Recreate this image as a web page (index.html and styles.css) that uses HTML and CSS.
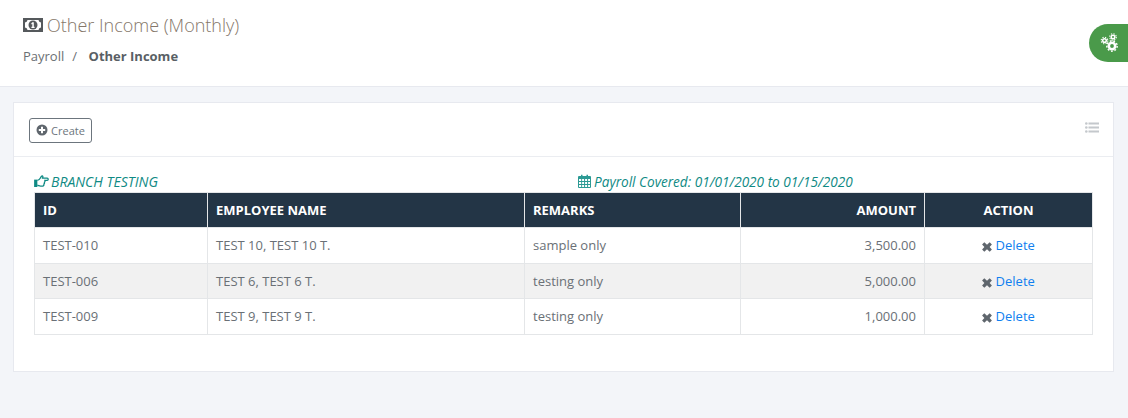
FILE: index.html
```html
<!DOCTYPE html>
<html lang="en">
<head>
<meta charset="utf-8">
<title>Other Income (Monthly)</title>
<link rel="stylesheet" href="styles.css">
</head>
<body>
<header class="page-header">
  <h1 class="title">
    <svg class="money-icon" viewBox="0 0 20 14" aria-hidden="true"><path fill-rule="evenodd" fill="#55595c" d="M0 0h20v14H0zM2 4.500v5A3 3 0 0 1 4.500 12h11A3 3 0 0 1 18 9.500v-5A3 3 0 0 1 15.500 2h-11A3 3 0 0 1 2 4.500z"/><circle cx="10" cy="7" r="4.500" fill="#55595c"/><path fill="#fff" d="M9.300 4.300h1.500v4.400h.8V10H8.400V8.700h.9V6.100l-.7.300-.4-1z"/></svg>
    <span>Other Income (Monthly)</span>
  </h1>
  <nav class="crumbs"><span>Payroll</span><span class="sep">/</span><strong>Other Income</strong></nav>
  <button class="settings-tab" aria-label="Settings">
    <svg viewBox="0 0 20 20" width="20" height="20" aria-hidden="true">
      <g fill="none" stroke="#fff">
        <circle cx="12" cy="13" r="3.200" stroke-width="2.600"/>
        <circle cx="12" cy="13" r="5.200" stroke-width="1.400" stroke-dasharray="1.800 1.800"/>
        <circle cx="4.500" cy="7.500" r="1.800" stroke-width="1.500"/>
        <circle cx="4.500" cy="7.500" r="3.300" stroke-width="1.100" stroke-dasharray="1.300 1.300"/>
        <circle cx="13" cy="4" r="1.800" stroke-width="1.500"/>
        <circle cx="13" cy="4" r="3.300" stroke-width="1.100" stroke-dasharray="1.300 1.300"/>
      </g>
    </svg>
  </button>
</header>
<main class="content">
  <section class="card">
    <div class="card-head">
      <button class="create">
        <svg viewBox="0 0 12 12" width="12" height="12" aria-hidden="true"><circle cx="6" cy="6" r="5.500" fill="#5f666d"/><path d="M5 2.800h2V5h2.200v2H7v2.200H5V7H2.800V5H5z" fill="#fff"/></svg>
        <span class="create-label">Create</span>
      </button>
      <svg class="list-icon" viewBox="0 0 14 11" width="14" height="11" aria-hidden="true"><g fill="#c4c8cc"><circle cx="1.300" cy="1.500" r="1.300"/><circle cx="1.300" cy="5.500" r="1.300"/><circle cx="1.300" cy="9.500" r="1.300"/><rect x="3.500" y=".5" width="10.500" height="2"/><rect x="3.500" y="4.500" width="10.500" height="2"/><rect x="3.500" y="8.500" width="10.500" height="2"/></g></svg>
    </div>
    <div class="card-body">
      <div class="meta">
        <div class="meta-item branch">
          <svg viewBox="0 0 16 13" width="15" height="12" aria-hidden="true"><path fill="#0f8a84" d="M0 5h3.500v8H0z"/><path fill="none" stroke="#0f8a84" stroke-width="1.400" d="M3.500 5.800c1.500 0 2.500-1.200 3.300-2.600C7.400 2.100 7.900 1 8.700.9c.9 0 1 1.100.5 2.400h5c1.400 0 1.400 2.500 0 2.500h-2.500c.3 1 .1 1.700-.5 2.100.2.800 0 1.500-.6 1.900.2 1 -.2 2.200-1.300 2.200H7c-1.300 0-2.300-.7-3.500-.9"/></svg>
          <em>BRANCH TESTING</em>
        </div>
        <div class="meta-item period">
          <svg viewBox="0 0 13 14" width="13" height="14" aria-hidden="true"><path fill="#2b9a94" fill-rule="evenodd" d="M1 2h2V.8h1.500V2h4V.8H10V2h2a1 1 0 0 1 1 1v10a1 1 0 0 1-1 1H1a1 1 0 0 1-1-1V3a1 1 0 0 1 1-1zM1 5v2h2.200V5zm3.100 0v2h2V5zm3 0v2h2V5zm3 0v2H12V5zM1 8v2h2.200V8zm3.100 0v2h2V8zm3 0v2h2V8zm3 0v2H12V8zM1 11v2h2.200v-2zm3.100 0v2h2v-2zm3 0v2h2v-2zm3 0v2H12v-2z"/></svg>
          <em>Payroll Covered: 01/01/2020 to 01/15/2020</em>
        </div>
      </div>
      <table class="income">
        <colgroup><col class="c-id"><col class="c-name"><col class="c-remarks"><col class="c-amount"><col class="c-action"></colgroup>
        <thead>
          <tr><th>ID</th><th>EMPLOYEE NAME</th><th>REMARKS</th><th class="right">AMOUNT</th><th class="center">ACTION</th></tr>
        </thead>
        <tbody>
          <tr><td>TEST-010</td><td>TEST 10, TEST 10 T.</td><td>sample only</td><td class="right">3,500.00</td><td class="center"><svg class="x" viewBox="0 0 10 10" width="10" height="10" aria-hidden="true"><path d="M2.300.3 5 2.700 7.700.3 9.900 2.500 7.600 5l2.300 2.500-2.200 2.200L5 7.300 2.300 9.700.1 7.500 2.400 5 .1 2.500z"/></svg> <a href="#">Delete</a></td></tr>
          <tr class="alt"><td>TEST-006</td><td>TEST 6, TEST 6 T.</td><td>testing only</td><td class="right">5,000.00</td><td class="center"><svg class="x" viewBox="0 0 10 10" width="10" height="10" aria-hidden="true"><path d="M2.300.3 5 2.700 7.700.3 9.900 2.500 7.600 5l2.300 2.500-2.200 2.200L5 7.300 2.300 9.700.1 7.500 2.400 5 .1 2.500z"/></svg> <a href="#">Delete</a></td></tr>
          <tr><td>TEST-009</td><td>TEST 9, TEST 9 T.</td><td>testing only</td><td class="right">1,000.00</td><td class="center"><svg class="x" viewBox="0 0 10 10" width="10" height="10" aria-hidden="true"><path d="M2.300.3 5 2.700 7.700.3 9.900 2.500 7.600 5l2.300 2.500-2.200 2.200L5 7.300 2.300 9.700.1 7.500 2.400 5 .1 2.500z"/></svg> <a href="#">Delete</a></td></tr>
        </tbody>
      </table>
    </div>
  </section>
</main>
</body>
</html>
```
FILE: styles.css
```css
* { box-sizing: border-box; }
html, body { margin: 0; height: 100%; }
body {
  background: #f3f5f9;
  font-family: "Open Sans", sans-serif;
  font-size: 13px;
  color: #6a7076;
  overflow: hidden;
}
.page-header {
  position: relative;
  height: 87px;
  background: #fff;
  border-bottom: 1px solid #e7e9ef;
  padding: 13px 23px 0;
}
.title {
  margin: 0;
  display: flex;
  align-items: center;
  gap: 4px;
  font-size: 18px;
  font-weight: 300;
  line-height: 24px;
  color: #85776a;
}
.money-icon { width: 20px; height: 14px; }
.crumbs {
  margin-top: 8px;
  display: flex;
  font-size: 13px;
  line-height: 22px;
  color: #6b6f73;
}
.sep { margin: 0 11.500px 0 8px; }
.crumbs strong { color: #595f65; font-weight: 700; }
.settings-tab {
  position: absolute;
  top: 24px;
  right: 0;
  width: 39px;
  height: 38px;
  border: 0;
  padding: 0 0 1px 11px;
  display: flex;
  align-items: center;
  border-radius: 19px 0 0 19px;
  background: #4a9a4a;
}
.content { padding: 15px 14px 0 13px; }
.card {
  height: 270px;
  background: #fff;
  border: 1px solid #e7e9ef;
}
.card-head {
  height: 54px;
  padding: 15px 14px 0 15px;
  display: flex;
  justify-content: space-between;
  align-items: flex-start;
  border-bottom: 1px solid #ebedf1;
}
.create {
  height: 25px;
  width: 63px;
  padding: 0 0 1px;
  display: flex;
  align-items: center;
  justify-content: center;
  gap: 3px;
  background: #fff;
  border: 1px solid #6c757d;
  border-radius: 3px;
  color: #6c757d;
  font: 11px "Open Sans", sans-serif;
}
.card-body { padding: 14px 20px 0; }
.list-icon { margin-top: 4px; }
.meta {
  display: flex;
  height: 21px;
  padding-bottom: 1px;
  color: #0f8a84;
}
.meta-item { display: flex; align-items: center; gap: 3px; }
.branch { width: 544px; font-size: 14px; gap: 2px; }
.period { font-size: 13.600px; }
.income {
  width: 1059px;
  border-collapse: collapse;
  table-layout: fixed;
}
.c-id { width: 173px; }
.c-name { width: 317px; }
.c-remarks { width: 216px; }
.c-amount { width: 184px; }
.c-action { width: 168px; }
.income th, .income td {
  padding: 0 8px;
  border: 1px solid #e4e6e8;
  text-align: left;
}
.income th {
  height: 35px;
  background: #233546;
  color: #fff;
  font-weight: 700;
  border-color: #e4e6e8;
}
.income td { height: 35.500px; }
.alt td { background: #f1f1f1; }
.income .right { text-align: right; }
.income .center { text-align: center; }
.x { fill: #5f666d; vertical-align: -2px; }
.income a { color: #0f7fef; text-decoration: none; }
```
